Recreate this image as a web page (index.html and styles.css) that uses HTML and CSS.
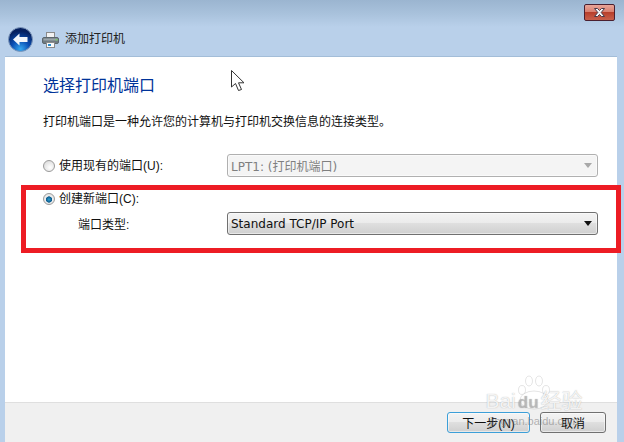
FILE: index.html

```html
<!DOCTYPE html>
<html lang="zh-CN">
<head>
    <meta charset="UTF-8">
    <title>添加打印机</title>
    <link rel="stylesheet" href="styles.css">
</head>
<body>
    <div class="window">
        <!-- Title bar with close button -->
        <div class="caption">
            <div class="close-btn">
                <svg width="15" height="11" viewBox="0 0 15 11"><path d="M2.500 1.500h3l2 2 2-2h3l-3.300 4 3.300 4h-3l-2-2-2 2h-3l3.300-4z" fill="#f4f6f8" stroke="#4a3a48" stroke-width="1"/></svg>
            </div>
        </div>

        <!-- Back button, printer icon, wizard name -->
        <div class="nav">
            <svg class="back" width="25" height="25" viewBox="0 0 25 25">
                <defs>
                    <radialGradient id="orb" cx="50%" cy="90%" r="75%">
                        <stop offset="0" stop-color="#35a8f0"/>
                        <stop offset="0.5" stop-color="#0a4fb4"/>
                        <stop offset="1" stop-color="#05205f"/>
                    </radialGradient>
                </defs>
                <circle cx="12.500" cy="12.500" r="12" fill="url(#orb)" stroke="#7f98bb" stroke-width="1"/>
                <path d="M5 12.500L11.500 6.500V10H19.500V15H11.500V18.500Z" fill="#f2f6fb"/>
            </svg>
            <svg class="printer" width="17" height="17" viewBox="0 0 17 17">
                <rect x="4.500" y="1.500" width="8" height="6" fill="#f2f2f2" stroke="#8a8a8a"/>
                <rect x="0.500" y="6.500" width="16" height="6" rx="1.500" fill="#6f7a80" stroke="#5c666c"/>
                <rect x="1.500" y="7.500" width="14" height="2" fill="#9aa4aa"/>
                <rect x="13.500" y="8" width="2" height="1.500" fill="#7ed06a"/>
                <rect x="4.500" y="11.500" width="8" height="5" fill="#fafafa" stroke="#8a8a8a"/>
                <rect x="6" y="13" width="3" height="2" fill="#2c8fd0"/>
            </svg>
            <span class="nav-title">添加打印机</span>
        </div>

        <div class="content">
            <div class="main">
                <h1 class="heading">选择打印机端口</h1>
                <p class="desc">打印机端口是一种允许您的计算机与打印机交换信息的连接类型。</p>

                <div class="row first-row">
                    <label class="radio-label">
                        <span class="radio"></span>
                        <span>使用现有的端口(U):</span>
                    </label>
                    <div class="combo disabled">
                        <span>LPT1: (打印机端口)</span>
                        <span class="arrow"></span>
                    </div>
                </div>

                <label class="radio-label second-radio">
                    <span class="radio checked"></span>
                    <span>创建新端口(C):</span>
                </label>
                <div class="row type-row">
                    <span class="type-label">端口类型:</span>
                    <div class="combo">
                        <span>Standard TCP/IP Port</span>
                        <span class="arrow"></span>
                    </div>
                </div>
            </div>

            <div class="footer">
                <button class="btn default">下一步(N)</button>
                <button class="btn">取消</button>
            </div>
        </div>

        <!-- Things drawn over the screenshot -->
        <div class="highlight"></div>
        <svg class="cursor" width="14" height="22" viewBox="0 0 14 22">
            <path d="M0.500 0.500V17L4.500 13.500L7.500 20.500L10.500 19.500L7.500 12.800H13Z" fill="#fff" stroke="#333" stroke-width="1"/>
        </svg>
        <div class="watermark">
            <svg class="paw" width="36" height="36" viewBox="0 0 36 36">
                <ellipse cx="6" cy="15" rx="3.500" ry="4.500"/>
                <ellipse cx="13" cy="6" rx="3.500" ry="5"/>
                <ellipse cx="23" cy="6" rx="3.500" ry="5"/>
                <ellipse cx="30" cy="15" rx="3.500" ry="4.500"/>
                <ellipse cx="18" cy="25" rx="14" ry="9"/>
            </svg>
            <div class="wm-main">Bai<span class="wm-du">du</span>经验</div>
            <div class="wm-url">jingyan.baidu.com</div>
        </div>
    </div>
</body>
</html>
```

FILE: styles.css

```css
* {
    box-sizing: border-box;
}

body {
    margin: 0;
    font-family: "Liberation Sans", "Noto Sans CJK SC", sans-serif;
    font-size: 12px;
    color: #111;
}

.window {
    position: relative;
    width: 624px;
    height: 442px;
    overflow: hidden;
    display: flex;
    flex-direction: column;
    background: linear-gradient(#9bb5d0 0, #a9c2dc 14px, #b9d0ea 27px, #b9d0ea 100%);
}

/* Title bar */
.caption {
    height: 22px;
    padding: 4px 9px 0 0;
    display: flex;
    justify-content: flex-end;
}

.close-btn {
    width: 31px;
    height: 17px;
    border: 1px solid #4a2030;
    border-radius: 2px;
    background: linear-gradient(#e8a598 0, #d98070 45%, #b8402c 50%, #c8604c 100%);
    display: flex;
    justify-content: center;
    align-items: center;
}

/* Navigation strip */
.nav {
    height: 34px;
    padding: 5px 0 0 8px;
    display: flex;
    align-items: flex-start;
}

.back {
    flex: none;
}

.printer {
    margin: 4px 0 0 9px;
    flex: none;
}

.nav-title {
    margin: 3px 0 0 6px;
    line-height: 18px;
    color: #222;
}

/* White page */
.content {
    flex: 1;
    margin: 0 7px 0 5px;
    background: #fff;
    border-top: 1px solid #a3bdd8;
    display: flex;
    flex-direction: column;
}

.main {
    flex: 1;
    padding: 0 19px 0 38px;
}

.heading {
    margin: 17px 0 0;
    font-size: 16px;
    font-weight: normal;
    line-height: 24px;
    color: #003399;
}

.desc {
    margin: 15px 0 0;
    line-height: 18px;
}

.row {
    display: flex;
    align-items: center;
    justify-content: space-between;
}

.first-row {
    margin-top: 23px;
}

.radio-label {
    display: flex;
    align-items: center;
    gap: 4px;
    line-height: 18px;
}

.second-radio {
    margin-top: 13px;
}

.radio {
    width: 12px;
    height: 12px;
    border-radius: 50%;
    border: 1px solid #9a9a9a;
    background: radial-gradient(circle at 60% 65%, #fff 0, #d4d4d4 100%);
}

.radio.checked {
    background: radial-gradient(circle at 50% 55%, #2f9fd0 0, #0c5a8c 38%, #eee 46%, #ddd 100%);
}

.type-row {
    margin-top: 4px;
}

.type-label {
    margin-left: 35px;
}

/* Drop-down lists */
.combo {
    width: 371px;
    height: 23px;
    padding: 0 5px 0 3px;
    border: 1px solid #707070;
    border-radius: 3px;
    background: linear-gradient(#f3f3f3 0, #ececec 45%, #dfdfdf 50%, #cfcfcf 100%);
    box-shadow: inset 0 0 0 1px rgba(255, 255, 255, 0.5);
    font-family: "DejaVu Sans", "Noto Sans CJK SC", sans-serif;
    font-size: 12px;
    display: flex;
    align-items: center;
    justify-content: space-between;
}

.combo.disabled {
    border-color: #b0b0b0;
    background: #f4f4f4;
    color: #7f7f7f;
}

.arrow {
    width: 0;
    height: 0;
    border-left: 4px solid transparent;
    border-right: 4px solid transparent;
    border-top: 5px solid #111;
}

.disabled .arrow {
    border-top-color: #a8a8a8;
}

/* Footer buttons */
.footer {
    height: 40px;
    padding: 9px 11px 0 0;
    background: #f0f0f0;
    border-top: 1px solid #dfdfdf;
    display: flex;
    justify-content: flex-end;
    gap: 10px;
}

.btn {
    width: 66px;
    height: 21px;
    padding: 0;
    border: 1px solid #707070;
    border-radius: 3px;
    background: linear-gradient(#f3f3f3 0, #ececec 45%, #dfdfdf 50%, #cfcfcf 100%);
    box-shadow: inset 0 0 0 1px rgba(255, 255, 255, 0.5);
    font-family: inherit;
    font-size: 12px;
    color: #111;
}

.btn.default {
    width: 83px;
    border-color: #3c9fd8;
}

/* Red box from the annotation */
.highlight {
    position: absolute;
    left: 21px;
    top: 185px;
    width: 600px;
    height: 68px;
    border: 5px solid #ed1c24;
}

.cursor {
    position: absolute;
    left: 231px;
    top: 70px;
}

/* Faint baidu mark */
.watermark {
    position: absolute;
    left: 478px;
    top: 375px;
    width: 112px;
    color: rgba(255, 255, 255, 0.85);
    text-align: center;
    text-shadow: 0 0 1px rgba(120, 120, 120, 0.6);
}

.paw {
    display: block;
    margin: 0 auto -22px;
    fill: rgba(255, 255, 255, 0.8);
    stroke: rgba(150, 150, 150, 0.25);
}

.wm-main {
    position: relative;
    font-size: 21px;
    line-height: 24px;
    white-space: nowrap;
}

.wm-du {
    margin: 0 2px;
    font-size: 17px;
    font-weight: bold;
    color: rgba(190, 190, 190, 0.5);
}

.wm-url {
    font-size: 11px;
    line-height: 13px;
    color: rgba(110, 110, 110, 0.5);
    text-shadow: none;
}
```
